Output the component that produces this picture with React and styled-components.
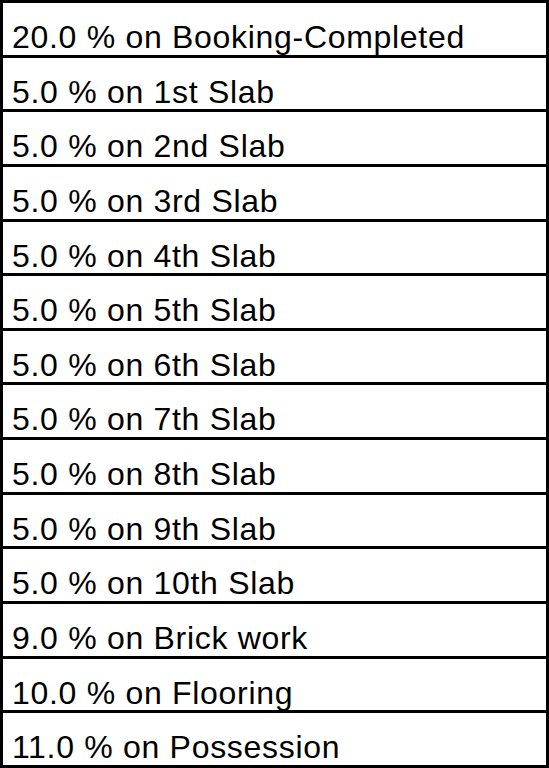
import React from 'react'
import styled, { createGlobalStyle } from 'styled-components'

const Global = createGlobalStyle`
  html, body {
    margin: 0;
    padding: 0;
    background: #fff;
  }
`

const Table = styled.div`
  width: 549px;
  height: 768px;
  box-sizing: border-box;
  border: 3px solid #000;
  border-top: none;
  display: flex;
  flex-direction: column;
  font-family: "Liberation Sans", Arial, sans-serif;
  color: #000;
`

const Row = styled.div`
  flex: 1;
  border-top: 3px solid #000;
  padding: 18px 0 0 9px;
  font-size: 32px;
  letter-spacing: 0.7px;
  line-height: 1;
  white-space: nowrap;
`

const rows = [
  '20.0 % on Booking-Completed',
  '5.0 % on 1st Slab',
  '5.0 % on 2nd Slab',
  '5.0 % on 3rd Slab',
  '5.0 % on 4th Slab',
  '5.0 % on 5th Slab',
  '5.0 % on 6th Slab',
  '5.0 % on 7th Slab',
  '5.0 % on 8th Slab',
  '5.0 % on 9th Slab',
  '5.0 % on 10th Slab',
  '9.0 % on Brick work',
  '10.0 % on Flooring',
  '11.0 % on Possession',
]

const App = () => {
  return (
    <>
      <Global />
      <Table>
        {rows.map((r) => (
          <Row key={r}>{r}</Row>
        ))}
      </Table>
    </>
  )
}

export default App
